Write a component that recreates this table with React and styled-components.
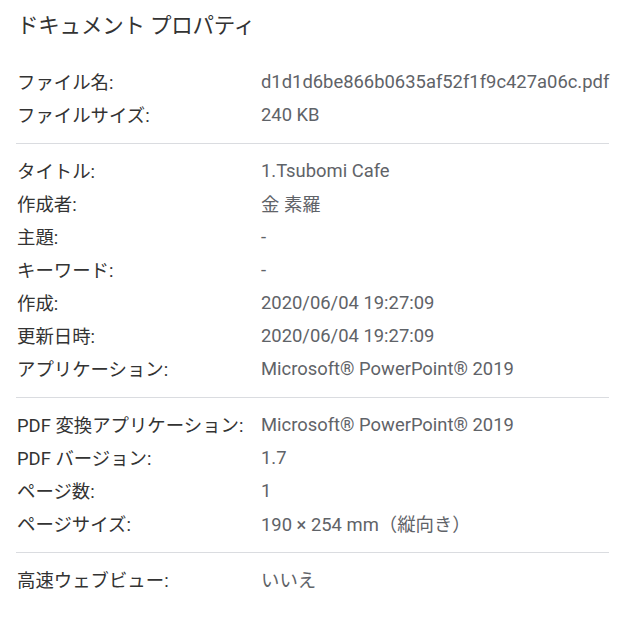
import React from "react";
import styled, { createGlobalStyle } from "styled-components";

const Global = createGlobalStyle`
  html, body { margin: 0; padding: 0; background: #fff; }
  body { font-family: Roboto, "Noto Sans CJK JP", sans-serif; }
`;

const Dialog = styled.div`
  width: 626px;
  box-sizing: border-box;
  padding: 12px 17px 0 16px;
  background: #fff;
`;

const Title = styled.h1`
  margin: 0 0 0 1px;
  font-size: 21.5px;
  line-height: 28px;
  font-weight: 400;
  color: #333;
  letter-spacing: -0.2px;
`;

const Section = styled.div`
  padding: 11px 0;
  border-bottom: ${(p) => (p.$last ? "none" : "1px solid #dadce0")};
  margin-top: ${(p) => (p.$first ? "15px" : "0")};
`;

const Row = styled.div`
  display: grid;
  grid-template-columns: 245px 1fr;
  box-sizing: border-box;
  height: 33px;
  padding-bottom: 3px;
  align-items: center;
  font-size: 18.4px;
  white-space: nowrap;
`;

const Label = styled.span`
  color: #333;
  padding-left: 1px;
`;

const Value = styled.span`
  color: #5f6368;
`;

const sections = [
  [
    ["ファイル名:", "d1d1d6be866b0635af52f1f9c427a06c.pdf"],
    ["ファイルサイズ:", "240 KB"],
  ],
  [
    ["タイトル:", "1.Tsubomi Cafe"],
    ["作成者:", "金 素羅"],
    ["主題:", "-"],
    ["キーワード:", "-"],
    ["作成:", "2020/06/04 19:27:09"],
    ["更新日時:", "2020/06/04 19:27:09"],
    ["アプリケーション:", "Microsoft® PowerPoint® 2019"],
  ],
  [
    ["PDF 変換アプリケーション:", "Microsoft® PowerPoint® 2019"],
    ["PDF バージョン:", "1.7"],
    ["ページ数:", "1"],
    ["ページサイズ:", "190 × 254 mm（縦向き）"],
  ],
  [["高速ウェブビュー:", "いいえ"]],
];

export default function App() {
  return (
    <>
      <Global />
      <Dialog>
        <Title>ドキュメント プロパティ</Title>
        {sections.map((rows, i) => (
          <Section key={i} $first={i === 0} $last={i === sections.length - 1}>
            {rows.map(([l, v]) => (
              <Row key={l}>
                <Label>{l}</Label>
                <Value>{v}</Value>
              </Row>
            ))}
          </Section>
        ))}
      </Dialog>
    </>
  );
}
